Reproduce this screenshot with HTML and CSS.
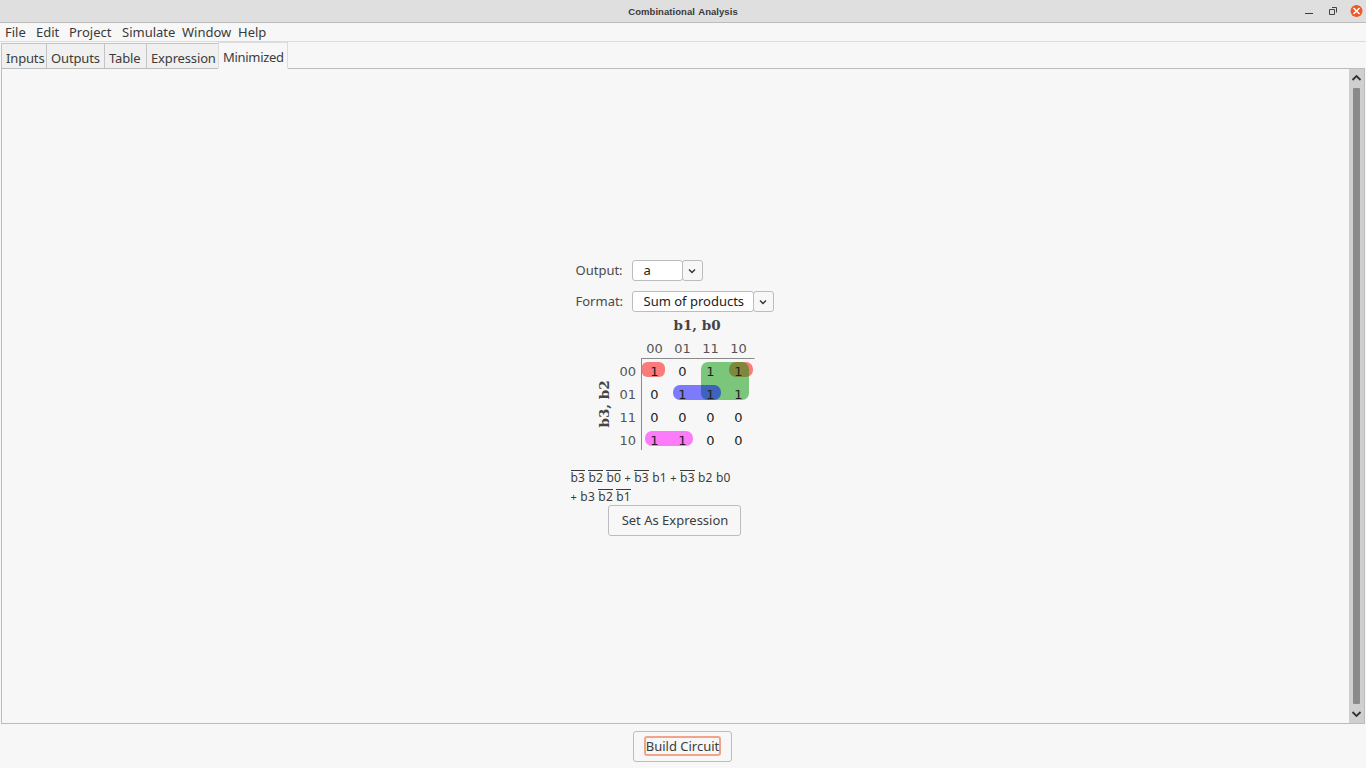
FILE: index.html
```html
<!DOCTYPE html>
<html lang="en">
<head>
    <meta charset="UTF-8">
    <title>Combinational Analysis</title>
    <link rel="stylesheet" href="styles.css">
</head>
<body>
    <header class="titlebar">
        <div class="title">Combinational Analysis</div>
        <div class="window-btns">
            <svg width="12" height="12" viewBox="0 0 12 12"><path d="M5 8.500h8" stroke="#3c3c3c" stroke-width="1"/></svg>
            <svg width="10" height="12" viewBox="0 0 10 12"><path d="M2.500 4.500h5v5h-5z M5 2.500h4.500v5" fill="none" stroke="#444" stroke-width="1"/></svg>
            <svg width="14" height="14" viewBox="0 0 14 14"><circle cx="6.500" cy="7" r="6" fill="#ea5a2a"/><path d="M3.500 4l6 6M9.500 4l-6 6" stroke="#fff" stroke-width="1.500"/></svg>
        </div>
    </header>

    <nav class="menubar">
        <span>File</span>
        <span>Edit</span>
        <span>Project</span>
        <span>Simulate</span>
        <span>Window</span>
        <span>Help</span>
    </nav>

    <div class="tabs">
        <div class="tab">Inputs</div>
        <div class="tab">Outputs</div>
        <div class="tab">Table</div>
        <div class="tab">Expression</div>
        <div class="tab selected">Minimized</div>
    </div>

    <main class="panel">
        <div class="content">
            <div class="minimized">
                <div class="options">
                    <label>Output:</label>
                    <div class="combo">
                        <div class="combo-value output-value">a</div>
                        <div class="combo-arrow"><svg width="8" height="6" viewBox="0 0 8 6"><path d="M1 1.500l3 3 3-3" fill="none" stroke="#333" stroke-width="1.400"/></svg></div>
                    </div>
                    <label>Format:</label>
                    <div class="combo">
                        <div class="combo-value format-value">Sum of products</div>
                        <div class="combo-arrow"><svg width="8" height="6" viewBox="0 0 8 6"><path d="M1 1.500l3 3 3-3" fill="none" stroke="#333" stroke-width="1.400"/></svg></div>
                    </div>
                </div>

                <svg class="kmap" width="171" height="137" viewBox="589 316 171 137">
                    <!-- groupings -->
                    <rect x="641.500" y="362" width="23.500" height="15" rx="6" fill="#ff0000" fill-opacity=".5"/>
                    <rect x="729" y="362" width="24" height="15" rx="7" fill="#ff0000" fill-opacity=".5"/>
                    <rect x="701" y="362" width="48" height="38" rx="7" fill="#009600" fill-opacity=".5"/>
                    <rect x="673" y="385" width="48" height="15" rx="7" fill="#0000ff" fill-opacity=".5"/>
                    <rect x="645" y="431" width="48" height="15" rx="7" fill="#ff00ff" fill-opacity=".5"/>

                    <path d="M641.500 358v92M641.500 358.500h113" fill="none" stroke="#8a8a8a"/>

                    <text class="var" x="697" y="330" text-anchor="middle">b1, b0</text>
                    <text class="var" transform="translate(609 404) rotate(-90)" text-anchor="middle">b3, b2</text>

                    <g class="head" text-anchor="middle">
                        <text x="654.500" y="353">00</text>
                        <text x="682.500" y="353">01</text>
                        <text x="710.500" y="353">11</text>
                        <text x="738.500" y="353">10</text>
                    </g>
                    <g class="head" text-anchor="end">
                        <text x="636" y="376">00</text>
                        <text x="636" y="399">01</text>
                        <text x="636" y="422">11</text>
                        <text x="636" y="445">10</text>
                    </g>
                    <g class="cell" text-anchor="middle">
                        <text x="654.500" y="376">1</text><text x="682.500" y="376">0</text><text x="710.500" y="376">1</text><text x="738.500" y="376">1</text>
                        <text x="654.500" y="399">0</text><text x="682.500" y="399">1</text><text x="710.500" y="399">1</text><text x="738.500" y="399">1</text>
                        <text x="654.500" y="422">0</text><text x="682.500" y="422">0</text><text x="710.500" y="422">0</text><text x="738.500" y="422">0</text>
                        <text x="654.500" y="445">1</text><text x="682.500" y="445">1</text><text x="710.500" y="445">0</text><text x="738.500" y="445">0</text>
                    </g>
                </svg>

                <div class="expression">
                    <div><span class="bar">b3</span> <span class="bar">b2</span> <span class="bar">b0</span> <span class="op">+</span> <span class="bar">b3</span> b1 <span class="op">+</span> <span class="bar">b3</span> b2 b0</div>
                    <div><span class="op">+</span> b3 <span class="bar">b2</span> <span class="bar">b1</span></div>
                </div>

                <button class="btn set-btn" type="button">Set As Expression</button>
            </div>
        </div>
        <div class="scrollbar">
            <svg width="11" height="8" viewBox="0 0 11 8"><path d="M1.500 6l4-4 4 4" fill="none" stroke="#333" stroke-width="1.800"/></svg>
            <div class="thumb"></div>
            <svg width="11" height="8" viewBox="0 0 11 8"><path d="M1.500 2l4 4 4-4" fill="none" stroke="#333" stroke-width="1.800"/></svg>
        </div>
    </main>

    <footer class="footer">
        <button class="btn build-btn" type="button"><span class="focus">Build Circuit</span></button>
    </footer>
</body>
</html>
```

FILE: styles.css
```css
html, body { margin: 0; height: 100%; }
body { width: 1366px; height: 768px; overflow: hidden; display: flex; flex-direction: column; background: #f7f7f7; color: #3c3c3c; font-family: "Noto Sans", sans-serif; font-size: 13px; }

.titlebar { height: 22px; flex: none; position: relative; background: #dfdfdf; border-bottom: 1px solid #bcbcbc; }
.title { text-align: center; font-family: "Liberation Sans", sans-serif; font-size: 9.500px; font-weight: bold; line-height: 24px; color: #3a3a3a; letter-spacing: .05px; word-spacing: 1px; }
.window-btns { position: absolute; top: 4px; right: 2px; display: flex; align-items: center; gap: 15px; }
.window-btns svg { overflow: visible; }
.window-btns svg:nth-child(2) { margin-right: -2px; }

.menubar { height: 18px; flex: none; display: grid; grid-template-columns: 31px 33px 53px 60px 56px auto; justify-content: start; padding-left: 5px; line-height: 19px; border-bottom: 1px solid #dcdcdc; color: #3a3a3a; }

.tabs { height: 26px; flex: none; display: flex; padding-left: 1px; align-items: flex-end; }
.tab { height: 25px; box-sizing: border-box; padding: 0 0 0 4px; line-height: 29px; border: 1px solid #c4c4c4; border-bottom: none; margin-right: -1px; background: #f0f0f0; letter-spacing: -.15px; white-space: nowrap; }
.tab:nth-child(1) { width: 46px; }
.tab:nth-child(2) { width: 59px; }
.tab:nth-child(3) { width: 43px; }
.tab:nth-child(4) { width: 73px; }
.tab.selected { width: 70px; height: 27px; line-height: 29px; padding-left: 4px; background: #f7f7f7; margin-bottom: -1px; border-color: #dcdcdc; border-bottom: 1px solid #f7f7f7; position: relative; letter-spacing: -.3px; }

.panel { flex: none; height: 656px; box-sizing: border-box; margin: 0 1px; border: 1px solid #bcbcbc; display: flex; }
.content { flex: 1; display: flex; justify-content: center; padding-top: 191px; }
.minimized { width: 209px; display: flex; flex-direction: column; align-items: center; margin-right: 1px; }

.options { display: grid; grid-template-columns: 47px max-content; column-gap: 9px; row-gap: 10px; align-items: center; align-self: flex-start; margin-left: 5px; }
.options label { color: #4a4a4a; padding-bottom: 2px; }
.combo { display: flex; }
.combo-value { height: 19px; line-height: 18px; background: #fff; border: 1px solid #bcbcbc; border-radius: 3px; color: #222; }
.output-value { width: 38px; padding-left: 11px; }
.format-value { width: 109px; padding-left: 11px; }
.combo-arrow { width: 19px; height: 19px; display: flex; align-items: center; justify-content: center; border: 1px solid #bcbcbc; border-radius: 3px; background: #f7f7f7; margin-left: -1px; }

.kmap { flex: none; margin: 4px 2px 0 0; display: block; }
.kmap .var { font-family: "DejaVu Serif", serif; font-weight: bold; font-size: 13.500px; fill: #444; }
.kmap .head { font-family: "DejaVu Sans", sans-serif; font-size: 13px; fill: #555; }
.kmap .cell { font-family: "DejaVu Sans", sans-serif; font-size: 13px; fill: #222; }

.expression { align-self: stretch; margin-top: 15px; font-size: 12px; line-height: 19px; color: #3c3c3c; white-space: nowrap; letter-spacing: .2px; }
.expression div { height: 19px; }
.bar { display: inline-block; line-height: 13px; border-top: 1px solid #3c3c3c; }
.op { font-size: 11px; }

.btn { font-family: inherit; font-size: 13px; color: #3c3c3c; background: #f7f7f7; border: 1px solid #bcbcbc; border-radius: 3px; }
.set-btn { width: 133px; height: 31px; padding: 0 0 2px 2px; margin: -1px 2px 0 0; }

.scrollbar { width: 15px; flex: none; background: #cfcfcf; display: flex; flex-direction: column; align-items: center; padding: 5px 0; box-sizing: border-box; }
.thumb { width: 7px; flex: 1; margin: 6px 0; background: #8a8a8a; border-radius: 1px; }

.footer { flex: 1; display: flex; justify-content: center; align-items: flex-start; padding-top: 7px; }
.build-btn { width: 99px; height: 31px; padding: 0 0 2px; margin-right: 1px; }
.focus { display: inline-block; padding: 0; line-height: 16px; border: 2px solid #f0a48c; border-radius: 3px; }
```
